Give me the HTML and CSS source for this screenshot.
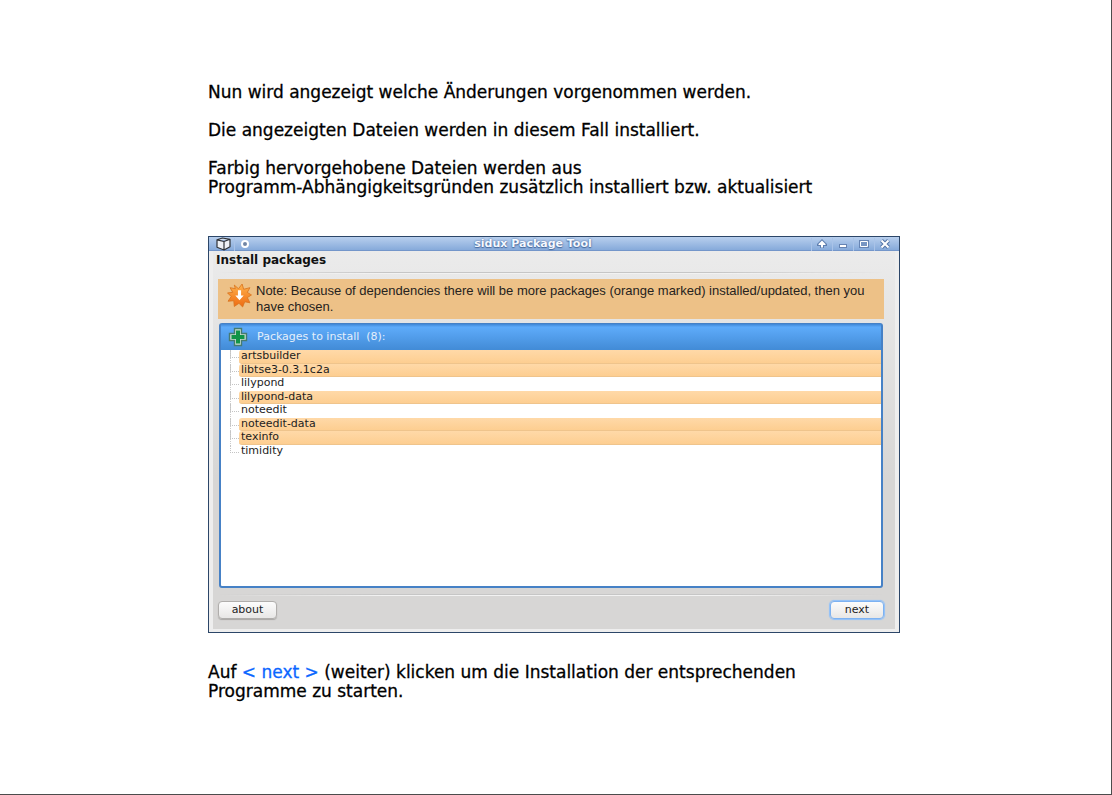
FILE: index.html
```html
<!DOCTYPE html>
<html lang="de">
<head>
<meta charset="utf-8">
<meta name="viewport" content="width=device-width, initial-scale=1">
<title>sidux Package Tool</title>
<link rel="stylesheet" href="styles.css">
</head>
<body>
<main class="slide">
  <section class="intro">
    <p>Nun wird angezeigt welche Änderungen vorgenommen werden.</p>
    <p>Die angezeigten Dateien werden in diesem Fall installiert.</p>
    <p>Farbig hervorgehobene Dateien werden aus<br>Programm-Abhängigkeitsgründen zusätzlich installiert bzw. aktualisiert</p>
  </section>

  <section class="window" lang="en">
    <header class="titlebar">
      <div class="tools">
        <svg class="cube" viewBox="0 0 16 14" aria-hidden="true"><path d="M1.500 2.800 7 1l7.500 1.300v7.400L8.500 13 1.500 10.200zM1.500 2.800l7 1.700 6-2.200M8.500 4.500V13" fill="#eef1f5" stroke="#303338" stroke-width="1.200" stroke-linejoin="round"/></svg>
        <button class="tool" type="button" aria-label="Sticky"><svg viewBox="0 0 12 12"><circle cx="6" cy="6" r="3" fill="#7185a4" stroke="#fff" stroke-width="2"/></svg></button>
      </div>
      <h1 class="title">sidux Package Tool</h1>
      <div class="tools tools-end">
        <button class="tool" type="button" aria-label="Shade"><svg viewBox="0 0 12 12"><path d="M6 1 1 6v2h3v2h4V8h3V6z" fill="#5f7fb0"/><path d="M6 2.500 2.500 6v1H5v2.500h2V7h2.500V6z" fill="#fff"/></svg></button>
        <button class="tool" type="button" aria-label="Minimize"><svg viewBox="0 0 12 12"><path d="M2 6h8v4H2z" fill="#6684b3"/><path d="M3 7h6v2H3z" fill="#fff"/></svg></button>
        <button class="tool" type="button" aria-label="Maximize"><svg viewBox="0 0 12 12"><path d="M1 2h10v8H1z" fill="#6684b3"/><path d="M2.500 3.500h7v5h-7z" fill="#7795c2" stroke="#fff"/></svg></button>
        <button class="tool" type="button" aria-label="Close"><svg viewBox="0 0 12 12"><path d="m2.500 2.500 7 7m0-7-7 7" stroke="#5675a6" stroke-width="4"/><path d="m2.500 2.500 7 7m0-7-7 7" stroke="#fff" stroke-width="2"/></svg></button>
      </div>
    </header>

    <div class="body">
      <h2 class="heading">Install packages</h2>
      <div class="rule"></div>
      <div class="note">
        <svg class="burst" viewBox="0 0 24 24" aria-hidden="true">
          <defs><linearGradient id="fire" x2="0" y2="1"><stop offset="0" stop-color="#ffb34d"/><stop offset="1" stop-color="#ee6a12"/></linearGradient></defs>
          <path d="m7 2 4 3.500L14.500 1l1.500 5 6-1.500L19.500 9l4 2.500-4 2.500 2.500 5-5-1-2 5-3.500-3.500L7 22.500 6.500 17 1 17.500 4 13 .5 9.500 5.500 9 3 4.500l5 1z" fill="url(#fire)" stroke="#d8731e" stroke-width=".8"/>
          <path d="M10.500 7h3v5H16l-4 4.500L8 12h2.500z" fill="#fff"/>
        </svg>
        <p class="note-text">Note: Because of dependencies there will be more packages (orange marked) installed/updated, then you have chosen.</p>
      </div>

      <div class="list">
        <div class="list-head">
          <svg class="plus" viewBox="0 0 20 20" aria-hidden="true"><path d="M6.500 1.500h7v5h5v7h-5v5h-7v-5h-5v-7h5z" fill="#c8dfcf" stroke="#467b71" stroke-width="1.400"/><path d="M8 3.500h4V8h4.500v4H12v4.500H8V12H3.500V8H8z" fill="#119448"/></svg>
          <span>Packages to install&nbsp; (8):</span>
        </div>
        <ul class="packages">
          <li><span class="pkg marked">artsbuilder</span></li>
          <li><span class="pkg marked">libtse3-0.3.1c2a</span></li>
          <li><span class="pkg">lilypond</span></li>
          <li><span class="pkg marked">lilypond-data</span></li>
          <li><span class="pkg">noteedit</span></li>
          <li><span class="pkg marked">noteedit-data</span></li>
          <li><span class="pkg marked">texinfo</span></li>
          <li><span class="pkg">timidity</span></li>
        </ul>
      </div>
      <div class="rule rule-bottom"></div>
      <footer class="actions">
        <button class="btn btn-about" type="button">about</button>
        <button class="btn btn-next" type="button">next</button>
      </footer>
    </div>
  </section>

  <p class="outro">Auf <span class="key">&lt; next &gt;</span> (weiter) klicken um die Installation der entsprechenden<br>Programme zu starten.</p>
</main>
</body>
</html>
```
FILE: styles.css
```css
* { box-sizing: border-box; }
body {
  margin: 0;
  background: #fff;
  color: #000;
  font-family: "DejaVu Sans", sans-serif;
}
p, h1, h2, ul { margin: 0; padding: 0; }
.slide {
  min-height: 100vh;
  padding: 83px 211px 80px 208px;
  border-right: 1px solid #4c4c4c;
  border-bottom: 1px solid #4c4c4c;
  font-size: 17px;
  line-height: 19px;
}
.intro { display: grid; gap: 19px; white-space: nowrap; }
.intro, .outro { -webkit-text-stroke: 0.3px currentColor; }
.outro { margin-top: 30px; white-space: nowrap; }
.key { color: #0a66ff; }

.window {
  margin-top: 39px;
  border: 1px solid #2c4668;
  background: #eeeeee;
  font-size: 11px;
  line-height: 16px;
  color: #262320;
}
.titlebar {
  display: grid;
  grid-template-columns: auto 1fr auto;
  align-items: center;
  height: 14px;
  background: linear-gradient(#b8cfee, #86aada);
  border-bottom: 1px solid #7396ca;
}
.title {
  font-size: 11px;
  line-height: 14px;
  font-weight: 700;
  text-align: center;
  color: #f4f8ff;
  text-shadow: 0 0 2px #3d5f93, 0 1px 1px #4b6da0;
}
.tools { display: flex; align-items: center; padding-left: 6px; }
.tools-end { justify-content: flex-end; padding: 0 4px 0 0; }
.cube { width: 17px; height: 14px; margin-right: 2px; }
.tool {
  width: 21px;
  height: 13px;
  padding: 0;
  border: 0;
  border-left: 1px solid #a9c3e8;
  background: none;
  display: flex;
  align-items: center;
  justify-content: center;
}
.tool svg { width: 12px; height: 12px; }

.body {
  margin: 0 4px 3px;
  padding: 1px 11px 10px 5px;
  background: linear-gradient(#ebebeb, #d7d6d5 60%);
}
.heading {
  margin-left: -2px;
  font-size: 12px;
  line-height: 16px;
  font-weight: 700;
  color: #111;
}
.rule {
  height: 2px;
  margin-top: 4px;
  background: linear-gradient(#c6c6c6 50%, #f2f2f2 50%);
  -webkit-mask-image: linear-gradient(90deg, transparent, #000 25%, #000 75%, transparent);
  mask-image: linear-gradient(90deg, transparent, #000 25%, #000 75%, transparent);
}
.note {
  display: flex;
  align-items: flex-start;
  gap: 4px;
  margin-top: 5px;
  padding: 4px 8px 4px 9px;
  background: #edc187;
}
.burst { flex: none; width: 25px; height: 25px; }
.note-text { font-family: "Liberation Sans", Arial, sans-serif; font-size: 13px; line-height: 16px; }
.list {
  min-height: 265px;
  margin: 4px 1px 0;
  border: 1px solid #4681c6;
  border-width: 1px 2px 2px;
  border-radius: 3px;
  background: #fff;
}
.list-head {
  display: flex;
  align-items: center;
  gap: 9px;
  height: 26px;
  padding-left: 7px;
  background: linear-gradient(#3f86d5, #5eabfa 12%, #428bd6);
  color: #e4effb;
}
.plus { width: 20px; height: 20px; }
.packages {
  list-style: none;
  padding-left: 9px;
  line-height: 12px;
}
.packages li {
  display: grid;
  grid-template-columns: 9px 1fr;
  font-size: 11px;
}
.packages li::before {
  content: "";
  height: 7px;
  border-left: 1px dotted #c4c4c4;
  border-bottom: 1px dotted #c4c4c4;
}
.packages li:not(:last-child) {
  background: linear-gradient(#ccc 50%, transparent 50%) 0 0 / 1px 2px repeat-y;
}
.pkg { display: block; height: 14px; padding-left: 2px; color: #1d1d1d; }
.packages li:nth-child(even) .pkg { height: 13px; }
.marked {
  border-radius: 3px 0 0 3px;
  background: linear-gradient(#ffd9a8, #fdce91);
  border-bottom: 1px solid #efc48c;
}
.rule-bottom { margin-top: 6px; }
.actions {
  display: flex;
  justify-content: space-between;
  margin-top: 5px;
}
.btn {
  height: 18px;
  padding: 0;
  border: 1px solid #b0aeac;
  border-radius: 4px;
  background: linear-gradient(#fcfcfc, #e8e7e6);
  box-shadow: 0 1px 1px #a9a7a5;
  font: 11px/14px "DejaVu Sans", sans-serif;
  color: #222;
}
.btn-about { width: 59px; }
.btn-next { width: 54px; border-color: #7db2f2; box-shadow: 0 0 1px 1px #8fc0fa; }
```
